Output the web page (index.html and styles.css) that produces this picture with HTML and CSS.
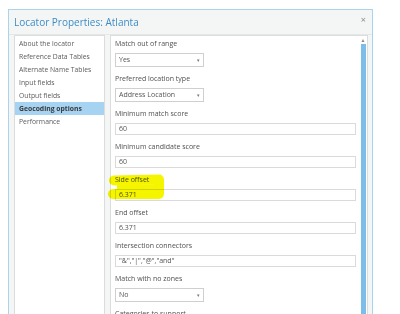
FILE: index.html
```html
<!DOCTYPE html>
<html lang="en">
<head>
    <meta charset="UTF-8">
    <title>Locator Properties</title>
    <link rel="stylesheet" href="styles.css">
</head>
<body>
    <div class="dialog">
        <div class="titlebar">
            <span class="title">Locator Properties: Atlanta</span>
            <span class="close">&#215;</span>
        </div>

        <div class="panels">
            <div class="nav">
                <div class="nav-item">About the locator</div>
                <div class="nav-item">Reference Data Tables</div>
                <div class="nav-item">Alternate Name Tables</div>
                <div class="nav-item">Input fields</div>
                <div class="nav-item">Output fields</div>
                <div class="nav-item active">Geocoding options</div>
                <div class="nav-item">Performance</div>
            </div>

            <div class="content">
                <div class="form">
                    <div class="group">
                        <div class="label">Match out of range</div>
                        <div class="select"><span>Yes</span><span class="arrow">&#9662;</span></div>
                    </div>
                    <div class="group">
                        <div class="label">Preferred location type</div>
                        <div class="select"><span>Address Location</span><span class="arrow">&#9662;</span></div>
                    </div>
                    <div class="group">
                        <div class="label">Minimum match score</div>
                        <div class="input">60</div>
                    </div>
                    <div class="group">
                        <div class="label">Minimum candidate score</div>
                        <div class="input">60</div>
                    </div>
                    <div class="group">
                        <div class="label">Side offset</div>
                        <div class="input">6.371</div>
                    </div>
                    <div class="group">
                        <div class="label">End offset</div>
                        <div class="input">6.371</div>
                    </div>
                    <div class="group">
                        <div class="label">Intersection connectors</div>
                        <div class="input">"&amp;","|","@","and"</div>
                    </div>
                    <div class="group">
                        <div class="label">Match with no zones</div>
                        <div class="select"><span>No</span><span class="arrow">&#9662;</span></div>
                    </div>
                    <div class="group">
                        <div class="label">Categories to support</div>
                    </div>
                </div>
                <div class="scrollbar">
                    <div class="scroll-up">&#9650;</div>
                    <div class="thumb"></div>
                </div>
            </div>
        </div>
    </div>

    <!-- marker scribble over the side offset field -->
    <svg class="marker" width="400" height="314" viewBox="0 0 400 314">
        <path d="M114 180.5 L159 179.5 L159 194 L113 194" fill="none" stroke="#f5f500" stroke-width="10" stroke-linecap="round" stroke-linejoin="round"/>
        <path d="M117 187 L158 187" fill="none" stroke="#f5f500" stroke-width="5"/>
    </svg>
</body>
</html>
```

FILE: styles.css
```css
html, body {
    height: 314px;
}

body {
    margin: 0;
    background-color: #ffffff;
    font-family: "Open Sans", Arial, sans-serif;
    color: #4f4f4f;
    overflow: hidden;
    position: relative;
}

.dialog {
    margin: 9px 0 0 8px;
    width: 363px;
    height: 320px;
    border: 1px solid #a9d3ef;
    border-bottom: none;
    background-color: #f4f6f6;
    display: flex;
    flex-direction: column;
}

.titlebar {
    height: 24px;
    display: flex;
    align-items: center;
    justify-content: space-between;
    padding: 0 6px 0 5px;
    border-bottom: 1px solid #e6e8e8;
}

.title {
    font-size: 10px;
    color: #3d8cc6;
}

.close {
    font-size: 9px;
    color: #8a8a8a;
    margin-top: -5px;
}

.panels {
    flex: 1;
    display: flex;
    gap: 5px;
    padding: 0 4px 0 5px;
    min-height: 0;
}

.nav {
    width: 89px;
    background-color: #ffffff;
    border: 1px solid #dcdcdc;
    padding-top: 1px;
}

.nav-item {
    height: 13px;
    line-height: 13px;
    padding-left: 4px;
    font-size: 6.8px;
    color: #5c5c5c;
    white-space: nowrap;
}

.nav-item.active {
    background-color: #a7d3f2;
    font-weight: bold;
    color: #3a3a3a;
}

.content {
    flex: 1;
    display: flex;
    background-color: #ffffff;
    border: 1px solid #dcdcdc;
}

.form {
    flex: 1;
    padding: 2px 4px 0 4px;
}

.group {
    margin-bottom: 6px;
}

.label {
    height: 12px;
    line-height: 12px;
    margin-bottom: 3px;
    font-size: 7px;
    color: #505050;
}

.input {
    height: 10px;
    line-height: 10px;
    border: 1px solid #dadada;
    padding-left: 3px;
    font-size: 7px;
    color: #555555;
}

.select {
    width: 81px;
    height: 12px;
    line-height: 12px;
    border: 1px solid #cfcfcf;
    padding: 0 3px;
    display: flex;
    justify-content: space-between;
    font-size: 7px;
    color: #555555;
}

.arrow {
    font-size: 5px;
    color: #777777;
}

.scrollbar {
    width: 6px;
    margin-right: 1px;
    display: flex;
    flex-direction: column;
    align-items: center;
}

.scroll-up {
    font-size: 5px;
    line-height: 6px;
    color: #8d8d8d;
    margin-top: 1px;
}

.thumb {
    flex: 1;
    width: 5px;
    margin-top: 1px;
    background-color: #7cbde9;
}

.marker {
    position: absolute;
    top: 0;
    left: 0;
    pointer-events: none;
    mix-blend-mode: multiply;
}
```
